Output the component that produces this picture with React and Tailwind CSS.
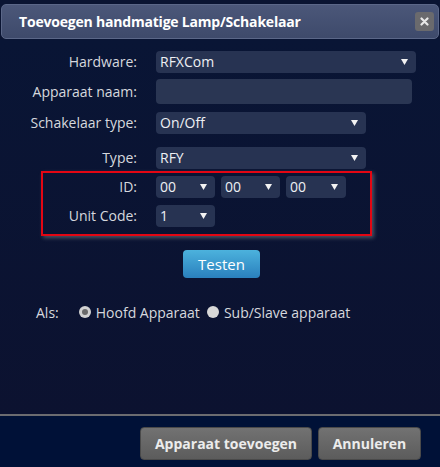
import React from "react";

const Arrow = () => (
  <svg width="7" height="6" viewBox="0 0 7 6" className="shrink-0">
    <path d="M0 0 H7 L3.5 6 Z" fill="#f2f2f2" />
  </svg>
);

const Select = ({ value, w }) => (
  <div
    className={`h-[22px] ${w} rounded-[4px] bg-[#273352] flex items-center justify-between pl-[4px] pr-[8px] text-[#eef0f4]`}
  >
    <span className="leading-none">{value}</span>
    <Arrow />
  </div>
);

const Label = ({ children, w = "w-[137px]" }) => (
  <div className={`${w} text-right text-[#d6d8de] shrink-0 leading-none`}>{children}</div>
);

export default function App() {
  return (
    <div
      className="w-[440px] h-[467px] bg-[#0a1432] flex flex-col text-[14px] overflow-hidden"
      style={{ fontFamily: '"Open Sans", "Noto Sans", sans-serif' }}
    >
      <div className="mt-[4px] mx-[1px] h-[35px] shrink-0 rounded-[5px] border border-[#5b6788] bg-gradient-to-b from-[#4b5779] to-[#3e4a6b] flex items-center justify-between pl-[17px] pr-[4px]">
        <span className="text-white font-bold text-[14px] tracking-[-0.2px]">
          Toevoegen handmatige Lamp/Schakelaar
        </span>
        <div className="w-[19px] h-[19px] rounded-[3px] bg-[#6a6a6d] flex items-center justify-center">
          <svg width="9" height="9" viewBox="0 0 9 9">
            <path d="M1.5 1.5 L7.5 7.5 M7.5 1.5 L1.5 7.5" stroke="#e8e8e8" strokeWidth="2.2" strokeLinecap="round" />
          </svg>
        </div>
      </div>

      <div className="flex-1 flex flex-col bg-gradient-to-b from-[#091535] to-[#0c1230]">
        <div className="mt-[12px] flex items-center">
          <Label>Hardware:</Label>
          <div className="ml-[19px]">
            <Select value="RFXCom" w="w-[260px]" />
          </div>
        </div>
        <div className="mt-[6px] flex items-center">
          <Label>Apparaat naam:</Label>
          <div className="ml-[19px] w-[256px] h-[25px] rounded-[4px] bg-[#2a3653]" />
        </div>
        <div className="mt-[8px] flex items-center">
          <Label>Schakelaar type:</Label>
          <div className="ml-[19px]">
            <Select value="On/Off" w="w-[210px]" />
          </div>
        </div>
        <div className="mt-[13px] flex items-center">
          <Label>Type:</Label>
          <div className="ml-[19px]">
            <Select value="RFY" w="w-[210px]" />
          </div>
        </div>

        <div className="mt-[2px] ml-[41px] w-[331px] border-2 border-[#e30613] pt-[3px] pb-[7px] shadow-[2px_2px_4px_rgba(160,160,160,0.45)]">
          <div className="flex items-center">
            <Label w="w-[94px]">ID:</Label>
            <div className="ml-[19px] flex gap-[6px]">
              <Select value="00" w="w-[59px]" />
              <Select value="00" w="w-[59px]" />
              <Select value="00" w="w-[60px]" />
            </div>
          </div>
          <div className="mt-[7px] flex items-center">
            <Label w="w-[94px]">Unit Code:</Label>
            <div className="ml-[19px]">
              <Select value="1" w="w-[59px]" />
            </div>
          </div>
        </div>

        <div className="mt-[14px] ml-[183px] w-[77px] h-[28px] rounded-[4px] bg-gradient-to-b from-[#4cb2dd] to-[#2a80bd] flex items-center justify-center text-white text-[15px]">
          Testen
        </div>

        <div className="mt-[24px] flex items-center text-[#d6d8de] h-[20px]">
          <span className="ml-[36px]">Als:</span>
          <div className="ml-[20px] w-[12px] h-[12px] rounded-full bg-[#d2d2d2] flex items-center justify-center">
            <div className="w-[6px] h-[6px] rounded-full bg-[#6a6a6a]" />
          </div>
          <span className="ml-[5px]">Hoofd Apparaat</span>
          <div className="ml-[7px] w-[12px] h-[12px] rounded-full bg-[#d8d8d8]" />
          <span className="ml-[5px]">Sub/Slave apparaat</span>
        </div>
      </div>

      <div className="h-[53px] shrink-0 border-t-[2px] border-[#6c6c70] bg-[#001137] flex items-start justify-end pt-[11px] pr-[19px] gap-[6px]">
        <div className="w-[172px] h-[33px] rounded-[4px] border border-[#4a4a4a] bg-gradient-to-b from-[#727272] to-[#5c5c5c] flex items-center justify-center text-[#ececec] font-bold text-[14px]">
          Apparaat toevoegen
        </div>
        <div className="w-[103px] h-[33px] rounded-[4px] border border-[#4a4a4a] bg-gradient-to-b from-[#727272] to-[#5c5c5c] flex items-center justify-center text-[#ececec] font-bold text-[14px]">
          Annuleren
        </div>
      </div>
    </div>
  );
}
